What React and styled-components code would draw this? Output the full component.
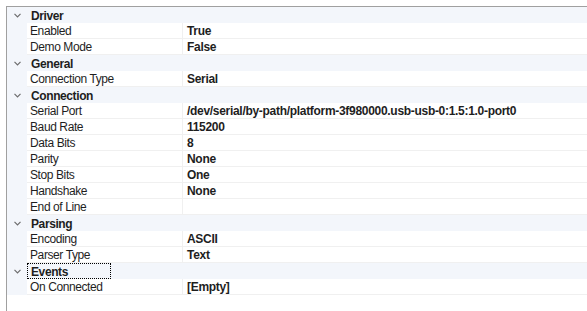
import React from 'react';
import styled, { createGlobalStyle } from 'styled-components';

const Colors = {
  Border: '#a0a0a0',
  Category: '#f3f6fb',
  Line: '#f0f0f0',
  Text: '#1e1e1e',
  Chevron: '#6d6d6d',
};

const categories = [
  {
    name: 'Driver',
    props: [['Enabled', 'True'], ['Demo Mode', 'False']],
  },
  {
    name: 'General',
    props: [['Connection Type', 'Serial']],
  },
  {
    name: 'Connection',
    props: [
      ['Serial Port', '/dev/serial/by-path/platform-3f980000.usb-usb-0:1.5:1.0-port0'],
      ['Baud Rate', '115200'],
      ['Data Bits', '8'],
      ['Parity', 'None'],
      ['Stop Bits', 'One'],
      ['Handshake', 'None'],
      ['End of Line', ''],
    ],
  },
  {
    name: 'Parsing',
    props: [['Encoding', 'ASCII'], ['Parser Type', 'Text']],
  },
  {
    name: 'Events',
    focused: true,
    props: [['On Connected', '[Empty]']],
  },
];

const Chevron = () => (
  <svg width="7" height="5" viewBox="0 0 7 5">
    <path d="M0.5 0.8 L3.5 3.8 L6.5 0.8" fill="none" stroke={Colors.Chevron} strokeWidth="1.2" />
  </svg>
);

const App = () => (
  <>
    <GlobalStyle />
    <Grid>
      {categories.map(cat => (
        <React.Fragment key={cat.name}>
          <CategoryRow>
            <Gutter>
              <Chevron />
            </Gutter>
            <CategoryLabel focused={cat.focused}>{cat.name}</CategoryLabel>
          </CategoryRow>
          {cat.props.map(([label, value]) => (
            <PropRow key={label}>
              <Gutter />
              <NameCell>{label}</NameCell>
              <ValueCell>{value}</ValueCell>
            </PropRow>
          ))}
        </React.Fragment>
      ))}
    </Grid>
  </>
);

const GlobalStyle = createGlobalStyle`
  html, body {
    margin: 0;
    padding: 0;
    background: #ffffff;
    overflow: hidden;
  }
  body {
    font-family: "Liberation Sans", Arial, sans-serif;
    font-size: 12px;
    letter-spacing: -0.4px;
    color: ${Colors.Text};
  }
`;

const Grid = styled.div`
  margin: 6px 0 0 6px;
  height: 305px;
  border-top: 1px solid ${Colors.Border};
  border-left: 1px solid ${Colors.Border};
  display: flex;
  flex-direction: column;
`;

const CategoryRow = styled.div`
  display: flex;
  align-items: stretch;
  height: 16px;
  background: ${Colors.Category};
  font-weight: bold;
`;

const PropRow = styled.div`
  display: grid;
  grid-template-columns: 20px 156px 1fr;
  height: 16px;
`;

const Gutter = styled.div`
  width: 20px;
  background: ${Colors.Category};
  display: flex;
  align-items: center;
  justify-content: center;
  padding-top: 1px;
  box-sizing: border-box;
`;

const CategoryLabel = styled.div`
  display: flex;
  align-items: center;
  padding: 1px 3px 0 3px;
  width: 84px;
  box-sizing: border-box;
  border: 1px dotted ${props => (props.focused ? '#000' : 'transparent')};
`;

const NameCell = styled.div`
  display: flex;
  align-items: center;
  padding: 1px 0 0 3px;
  background: #fff;
  border-right: 1px solid ${Colors.Line};
  border-bottom: 1px solid ${Colors.Line};
  white-space: nowrap;
`;

const ValueCell = styled.div`
  display: flex;
  align-items: center;
  padding: 1px 0 0 4px;
  background: #fff;
  font-weight: bold;
  letter-spacing: -0.3px;
  border-bottom: 1px solid ${Colors.Line};
  white-space: nowrap;
`;

export default App;
